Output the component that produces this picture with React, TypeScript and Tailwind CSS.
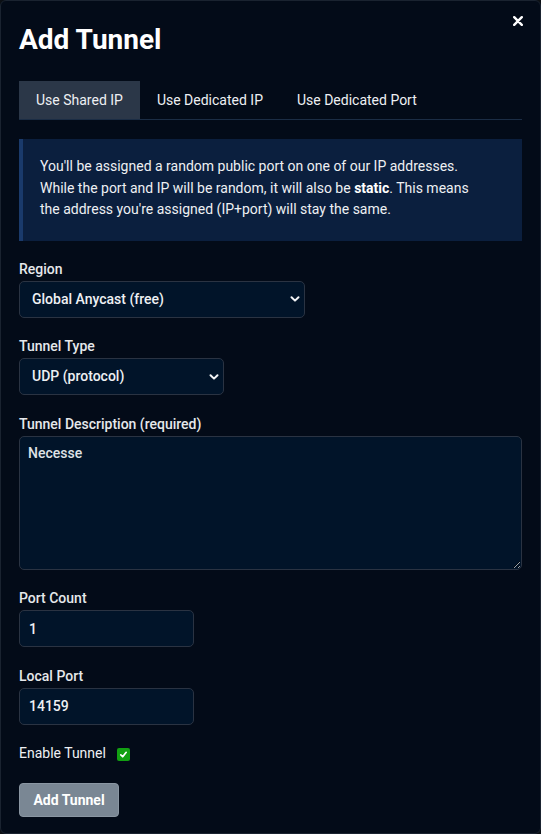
import React from "react";

const font = { fontFamily: 'Roboto, "Noto Sans", "Liberation Sans", sans-serif' };

function Chevron() {
  return (
    <svg
      className="pointer-events-none absolute right-[5px] top-1/2 -translate-y-1/2"
      width="10"
      height="8"
      viewBox="0 0 10 8"
      fill="none"
    >
      <path d="M1.5 2.2 L5 5.6 L8.5 2.2" stroke="#f3f4f6" strokeWidth="2" strokeLinecap="round" strokeLinejoin="round" />
    </svg>
  );
}

function Label({ children }: { children: React.ReactNode }) {
  return <label className="block text-[14px] leading-[21px] font-medium text-[#e6e8eb] mb-[1px]">{children}</label>;
}

export default function App() {
  return (
    <div className="min-h-[834px] w-[541px] bg-[#0b0f14]" style={font}>
      <div className="relative min-h-[834px] w-[541px] rounded-md border border-[#1a2330] bg-[#030b18] px-[18px] pt-[22px] pb-[16px]">
        <button className="absolute right-[14px] top-[12px] flex h-[16px] w-[16px] items-center justify-center">
          <svg width="10" height="10" viewBox="0 0 10 10">
            <path d="M1.2 1.2 L8.8 8.8 M8.8 1.2 L1.2 8.8" stroke="#ffffff" strokeWidth="2.4" strokeLinecap="round" />
          </svg>
        </button>
        <h1 className="text-[28px] leading-[34px] font-bold text-white">Add Tunnel</h1>

        <div className="mt-[24px] flex h-[39px] border-b border-[#1b2d45]">
          <div className="flex h-[38px] items-center bg-[#2b3748] px-[17px] text-[14px] text-[#eef0f3]">Use Shared IP</div>
          <div className="flex h-[38px] items-center px-[17px] text-[14px] text-[#eef0f3]">Use Dedicated IP</div>
          <div className="flex h-[38px] items-center px-[17px] text-[14px] text-[#eef0f3]">Use Dedicated Port</div>
        </div>

        <div className="mt-[19px] border-l-4 border-[#1a3a6b] bg-[#0b1f3e] pl-[17px] pr-3 pt-[17px] pb-[20px] text-[14px] leading-[21.5px] text-[#eef0f3]">
          You'll be assigned a random public port on one of our IP addresses.
          <br />
          While the port and IP will be random, it will also be <strong className="font-bold text-white">static</strong>. This means
          <br />
          the address you're assigned (IP+port) will stay the same.
        </div>

        <div className="mt-[18px] flex flex-col gap-[18.6px]">
          <div>
            <Label>Region</Label>
            <div className="relative w-[286px]">
              <select className="block h-[37px] w-full appearance-none rounded-[5px] border border-[#2a3342] bg-[#011429] pl-[12px] text-[14px] font-medium text-[#eef0f3] outline-none" defaultValue="g">
                <option value="g">Global Anycast (free)</option>
              </select>
              <Chevron />
            </div>
          </div>

          <div>
            <Label>Tunnel Type</Label>
            <div className="relative w-[205px]">
              <select className="block h-[37px] w-full appearance-none rounded-[5px] border border-[#2a3342] bg-[#011429] pl-[12px] text-[14px] font-medium text-[#eef0f3] outline-none" defaultValue="u">
                <option value="u">UDP (protocol)</option>
              </select>
              <Chevron />
            </div>
          </div>

          <div>
            <Label>Tunnel Description (required)</Label>
            <textarea
              className="block h-[134px] w-full rounded-[5px] border border-[#2a3342] bg-[#011429] px-[8px] py-[6px] text-[14px] leading-[21px] font-medium text-[#dfe2e6] outline-none"
              defaultValue="Necesse"
            />
          </div>

          <div>
            <Label>Port Count</Label>
            <input
              className="block h-[37px] w-[175px] rounded-[5px] border border-[#2a3342] bg-[#011429] px-[9px] text-[14px] font-medium text-[#eef0f3] outline-none"
              defaultValue="1"
            />
          </div>

          <div>
            <Label>Local Port</Label>
            <input
              className="block h-[37px] w-[175px] rounded-[5px] border border-[#2a3342] bg-[#011429] px-[9px] text-[14px] font-medium text-[#eef0f3] outline-none"
              defaultValue="14159"
            />
          </div>

          <div className="flex h-[21px] items-center">
            <span className="text-[14px] leading-[21px] text-[#eef0f3]">Enable Tunnel</span>
            <span className="ml-[11px] mt-[1px] flex h-[13px] w-[13px] items-center justify-center rounded-[2px] bg-[#12a012]">
              <svg width="9" height="9" viewBox="0 0 10 10">
                <path d="M2 5.4 L4.1 7.5 L8 2.6" stroke="#ffffff" strokeWidth="1.9" fill="none" strokeLinecap="round" strokeLinejoin="round" />
              </svg>
            </span>
          </div>

          <div>
            <button className="h-[34px] w-[100px] rounded-[4px] border border-[#8a96a2] bg-[#7a8794] text-[14px] font-bold text-white">
              Add Tunnel
            </button>
          </div>
        </div>
      </div>
    </div>
  );
}
